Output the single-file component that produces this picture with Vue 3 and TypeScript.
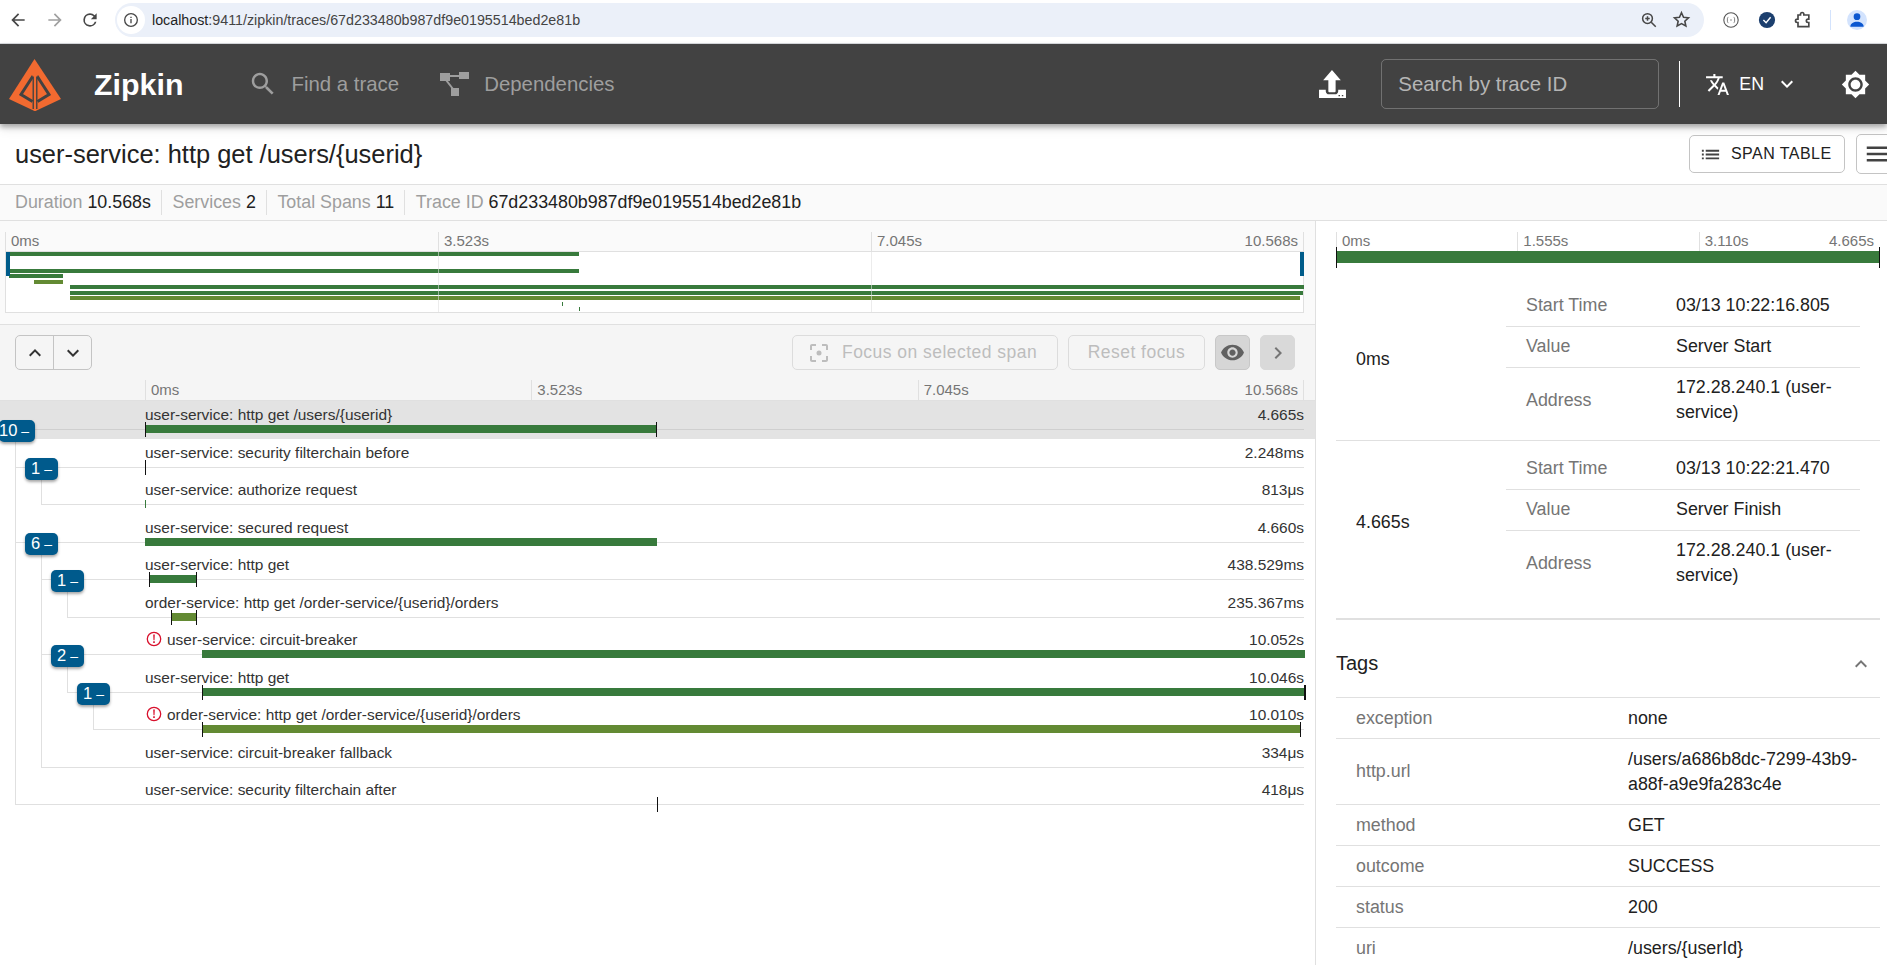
<script setup lang="ts">
interface Span {
  label: string
  dur: string
  line: number
  x1: number
  x2: number
  color?: string
  ticksL?: boolean
  ticksR?: boolean
  thickR?: boolean
  error?: boolean
  selected?: boolean
  badge?: string
  badgeX?: number
}
const green = '#387a3c'
const olive = '#638a33'
const chartLeft = 145
const chartWidth = 1159
const spans: Span[] = [
  { label: 'user-service: http get /users/{userid}', dur: '4.665s', line: 0, x1: 145, x2: 657, color: green, ticksL: true, ticksR: true, selected: true, badge: '10', badgeX: -1 },
  { label: 'user-service: security filterchain before', dur: '2.248ms', line: 15, x1: 145, x2: 145, ticksL: true, badge: '1', badgeX: 25 },
  { label: 'user-service: authorize request', dur: '813μs', line: 41, x1: 145, x2: 146, color: green },
  { label: 'user-service: secured request', dur: '4.660s', line: 15, x1: 145, x2: 657, color: green, badge: '6', badgeX: 25 },
  { label: 'user-service: http get', dur: '438.529ms', line: 41, x1: 149, x2: 197, color: green, ticksL: true, ticksR: true, badge: '1', badgeX: 51 },
  { label: 'order-service: http get /order-service/{userid}/orders', dur: '235.367ms', line: 67, x1: 171, x2: 197, color: olive, ticksL: true, ticksR: true },
  { label: 'user-service: circuit-breaker', dur: '10.052s', line: 41, x1: 202, x2: 1305, color: green, error: true, badge: '2', badgeX: 51 },
  { label: 'user-service: http get', dur: '10.046s', line: 67, x1: 202, x2: 1305, color: green, ticksL: true, ticksR: true, thickR: true, badge: '1', badgeX: 77 },
  { label: 'order-service: http get /order-service/{userid}/orders', dur: '10.010s', line: 93, x1: 202, x2: 1301, color: olive, error: true, ticksL: true, ticksR: true },
  { label: 'user-service: circuit-breaker fallback', dur: '334μs', line: 41, x1: 642, x2: 642 },
  { label: 'user-service: security filterchain after', dur: '418μs', line: 15, x1: 657, x2: 657, ticksL: true }
]
const laneStyle = (s: Span) => ({
  marginLeft: `${((s.x1 - chartLeft) / chartWidth) * 100}%`,
  width: `${((s.x2 - s.x1) / chartWidth) * 100}%`,
  background: s.color ?? 'transparent'
})
const vlines = [
  { x: 15, y1: 41, y2: 403 },
  { x: 41, y1: 79, y2: 103 },
  { x: 41, y1: 153, y2: 366 },
  { x: 67, y1: 191, y2: 216 },
  { x: 67, y1: 266, y2: 291 },
  { x: 93, y1: 303, y2: 328 }
]
const miniBars = [
  { left: 2, w: 571, c: green, row: 0 },
  { left: 0, w: 0, c: green, row: 1 },
  { left: 0, w: 0, c: green, row: 2 },
  { left: 3, w: 570, c: green, row: 3 },
  { left: 3, w: 54, c: green, row: 4 },
  { left: 28, w: 29, c: olive, row: 5 },
  { left: 64, w: 1234, c: green, row: 6 },
  { left: 64, w: 1233, c: green, row: 7 },
  { left: 64, w: 1230, c: olive, row: 8 },
  { left: 556, w: 1, c: green, row: 9 },
  { left: 573, w: 1, c: green, row: 10 }
]
const miniStyle = (b: { left: number; w: number; c: string }) => ({
  marginLeft: `${b.left}px`,
  width: `${b.w}px`,
  background: b.c
})
const annotations = [
  { at: '0ms', start: '03/13 10:22:16.805', value: 'Server Start' },
  { at: '4.665s', start: '03/13 10:22:21.470', value: 'Server Finish' }
]
const tags = [
  { k: 'exception', v: 'none' },
  { k: 'http.url', v: '/users/a686b8dc-7299-43b9-a88f-a9e9fa283c4e' },
  { k: 'method', v: 'GET' },
  { k: 'outcome', v: 'SUCCESS' },
  { k: 'status', v: '200' },
  { k: 'uri', v: '/users/{userId}' }
]
const info = [
  { k: 'Duration', v: '10.568s' },
  { k: 'Services', v: '2' },
  { k: 'Total Spans', v: '11' },
  { k: 'Trace ID', v: '67d233480b987df9e0195514bed2e81b' }
]
</script>

<template>
  <div class="page">
    <div class="chrome">
      <svg class="c-ic" viewBox="0 0 24 24" width="20" height="20"><path fill="#474747" d="M20 11H7.800l5.600-5.600L12 4l-8 8 8 8 1.400-1.400L7.800 13H20z" /></svg>
      <svg class="c-ic fwd" viewBox="0 0 24 24" width="20" height="20"><path fill="#a0a0a0" d="M4 11h12.200l-5.600-5.600L12 4l8 8-8 8-1.400-1.400 5.600-5.600H4z" /></svg>
      <svg class="c-ic rel" viewBox="0 0 24 24" width="20" height="20"><path fill="#474747" d="M17.650 6.350A7.960 7.960 0 0 0 12 4a8 8 0 1 0 7.730 10h-2.080A6 6 0 1 1 12 6c1.660 0 3.140.69 4.220 1.780L13 11h7V4z" /></svg>
      <div class="omni">
        <span class="omni-i"><svg viewBox="0 0 24 24" width="16" height="16"><circle cx="12" cy="12" r="9.500" fill="none" stroke="#474747" stroke-width="2" /><path fill="#474747" d="M11 10.500h2V17h-2zM11 7h2v2h-2z" /></svg></span>
        <span class="url"><b>localhost</b>:9411/zipkin/traces/67d233480b987df9e0195514bed2e81b</span>
        <svg class="zoomi" viewBox="0 0 24 24" width="18" height="18"><circle cx="10" cy="10" r="6.500" fill="none" stroke="#474747" stroke-width="2" /><path stroke="#474747" stroke-width="2" d="M15 15l6 6M10 7v6M7 10h6" /></svg>
        <svg class="star" viewBox="0 0 24 24" width="19" height="19"><path fill="none" stroke="#474747" stroke-width="2" d="M12 3.500l2.600 5.700 6.200.7-4.600 4.200 1.300 6.100L12 17.100l-5.500 3.100 1.300-6.100-4.600-4.200 6.200-.7z" /></svg>
      </div>
      <svg class="ext e1" viewBox="0 0 20 20" width="18" height="18"><circle cx="10" cy="10" r="8" fill="none" stroke="#555" stroke-width="1.200" /><path fill="none" stroke="#777" d="M7 7c-1 0-1 1-1 3s0 3 1 3M13 7c1 0 1 1 1 3s0 3-1 3M9 10h2" /></svg>
      <svg class="ext e2" viewBox="0 0 20 20" width="18" height="18"><circle cx="10" cy="10" r="9" fill="#1c3f6e" /><path fill="none" stroke="#fff" stroke-width="1.600" d="M6 10l3 3 5-6" /></svg>
      <svg class="ext e3" viewBox="0 0 24 24" width="20" height="20"><path fill="none" stroke="#474747" stroke-width="2" d="M9 5a2 2 0 0 1 4 0v1h6v5h-1a2 2 0 0 0 0 4h1v5H6v-5H5a2 2 0 0 1 0-4h1V6h3z" /></svg>
      <span class="c-div"></span>
      <span class="avatar"><svg viewBox="0 0 24 24" width="20" height="20"><circle cx="12" cy="8" r="4" fill="#0b57d0" /><path fill="#0b57d0" d="M4 20c0-4 4-6 8-6s8 2 8 6z" /></svg></span>
    </div>

    <header class="bar">
      <svg class="logo" viewBox="0 0 52 52" width="52" height="52">
        <path fill="#f26a30" d="M25.500 0L52 40 26.500 52h-1L0 40z" />
        <path fill="none" stroke="#424242" stroke-width="3" d="M24 17L12 35.500 23.500 42.500M28 17L40 35.500 28.500 42.500" />
        <path fill="none" stroke="#424242" stroke-width="1.500" d="M24.300 17V50M27.700 17V50" />
        <path fill="#f26a30" d="M26 11l2.500 6.500h-1.400V52h-2.200V17.500h-1.400z" />
      </svg>
      <span class="brand">Zipkin</span>
      <svg class="nav-s" viewBox="0 0 24 24" width="30" height="30"><path fill="#9e9e9e" d="M15.500 14h-.79l-.28-.27C15.410 12.590 16 11.110 16 9.500 16 5.910 13.090 3 9.500 3S3 5.910 3 9.500 5.910 16 9.500 16c1.610 0 3.090-.59 4.230-1.570l.27.28v.79l5 4.990L20.490 19l-4.990-5zm-6 0C7.010 14 5 11.990 5 9.500S7.010 5 9.500 5 14 7.010 14 9.500 11.990 14 9.500 14z" /></svg>
      <span class="nav-t">Find a trace</span>
      <svg class="nav-d" viewBox="0 0 29 24" width="29" height="24"><path fill="#9e9e9e" d="M0 1h10v8H0zM19 0h10v7H19zM11 16h8v8h-8z" /><path fill="none" stroke="#9e9e9e" stroke-width="2" d="M9 4h11M6 8l7 9" /></svg>
      <span class="nav-t">Dependencies</span>
      <svg class="upload" viewBox="0 0 26 27" width="27" height="28"><path fill="#fff" d="M12.500 0L21 10h-5v10.500a1 1 0 0 1-1 1h-5a1 1 0 0 1-1-1V10H4z" /><path fill="#fff" d="M0 19h6.500v1.500c0 2 1.500 3 3 3h6c1.500 0 3-1 3-3V19H26v8H0z" /><path fill="#424242" d="M18.800 24h1.400v1.400h-1.400zM22 24h1.400v1.400H22z" /></svg>
      <div class="search">Search by trace ID</div>
      <span class="hdiv"></span>
      <svg class="tr" viewBox="0 0 24 24" width="25" height="25"><path fill="#fff" d="M12.870 15.070l-2.540-2.510.03-.03c1.740-1.940 2.980-4.170 3.710-6.530H17V4h-7V2H8v2H1v1.990h11.170C11.500 7.920 10.440 9.750 9 11.350 8.070 10.320 7.300 9.190 6.690 8h-2c.73 1.630 1.730 3.170 2.980 4.560l-5.090 5.020L4 19l5-5 3.110 3.110.76-2.040zM18.500 10h-2L12 22h2l1.120-3h4.750L21 22h2l-4.500-12zm-2.620 7l1.620-4.330L19.120 17h-3.240z" /></svg>
      <span class="en">EN</span>
      <svg class="chev" viewBox="0 0 24 24" width="24" height="24"><path fill="#fff" d="M16.590 8.590L12 13.170 7.410 8.590 6 10l6 6 6-6z" /></svg>
      <svg class="theme" viewBox="0 0 24 24" width="29" height="29"><path fill="#fff" d="M20 8.690V4h-4.690L12 .69 8.690 4H4v4.690L.69 12 4 15.310V20h4.690L12 23.310 15.310 20H20v-4.690L23.310 12 20 8.690zM12 18c-3.310 0-6-2.690-6-6s2.690-6 6-6 6 2.690 6 6-2.690 6-6 6zm0-10c-2.210 0-4 1.790-4 4s1.790 4 4 4 4-1.790 4-4-1.790-4-4-4z" /></svg>
    </header>

    <div class="title-row">
      <h1 class="title">user-service: http get /users/{userid}</h1>
      <button class="t-btn span-btn">
        <svg viewBox="0 0 24 24" width="23" height="23"><path fill="#424242" d="M3 13h2v-2H3v2zm0 4h2v-2H3v2zm0-8h2V7H3v2zm4 4h14v-2H7v2zm0 4h14v-2H7v2zM7 7v2h14V7H7z" /></svg>
        <span>SPAN TABLE</span>
      </button>
      <button class="t-btn menu-btn">
        <svg viewBox="0 0 24 24" width="30" height="30"><path fill="#424242" d="M3 18h18v-2H3v2zm0-5h18v-2H3v2zm0-7v2h18V6H3z" /></svg>
      </button>
    </div>

    <div class="info">
      <div v-for="i in info" :key="i.k" class="info-item"><span class="info-k">{{ i.k }}</span> <span class="info-v">{{ i.v }}</span></div>
    </div>

    <main class="main">
      <section class="left">
        <div class="mini">
          <div class="mini-axis">
            <span class="m-lab">0ms</span>
            <span class="m-lab">3.523s</span>
            <span class="m-lab">7.045s</span>
            <span class="m-lab end">10.568s</span>
          </div>
          <div class="mini-chart">
            <span class="m-grid g1"></span>
            <span class="m-grid g2"></span>
            <span class="handle h-l"></span>
            <span class="handle h-r"></span>
            <div v-for="b in miniBars" :key="b.row" class="m-row"><div class="m-bar" :style="miniStyle(b)"></div></div>
          </div>
        </div>

        <div class="tools">
          <div class="updown">
            <button class="ud"><svg viewBox="0 0 24 24" width="24" height="24"><path fill="#333" d="M12 8l-6 6 1.410 1.410L12 10.830l4.590 4.580L18 14z" /></svg></button>
            <button class="ud"><svg viewBox="0 0 24 24" width="24" height="24"><path fill="#333" d="M16.590 8.590L12 13.170 7.410 8.590 6 10l6 6 6-6z" /></svg></button>
          </div>
          <button class="dis focus">
            <svg viewBox="0 0 24 24" width="24" height="24"><path fill="#bdbdbd" d="M5 15H3v4c0 1.100.9 2 2 2h4v-2H5v-4zM5 5h4V3H5c-1.100 0-2 .9-2 2v4h2V5zm14-2h-4v2h4v4h2V5c0-1.100-.9-2-2-2zm0 16h-4v2h4c1.100 0 2-.9 2-2v-4h-2v4z" /><circle cx="12" cy="12" r="2.500" fill="#bdbdbd" /></svg>
            <span>Focus on selected span</span>
          </button>
          <button class="dis reset">Reset focus</button>
          <button class="sq on"><svg viewBox="0 0 24 24" width="25" height="25"><path fill="#616161" d="M12 4.500C7 4.500 2.730 7.610 1 12c1.730 4.390 6 7.500 11 7.500s9.270-3.110 11-7.500c-1.730-4.390-6-7.500-11-7.500zM12 17c-2.760 0-5-2.240-5-5s2.240-5 5-5 5 2.240 5 5-2.240 5-5 5zm0-8c-1.660 0-3 1.340-3 3s1.340 3 3 3 3-1.340 3-3-1.340-3-3-3z" /></svg></button>
          <button class="sq next"><svg viewBox="0 0 24 24" width="24" height="24"><path fill="#757575" d="M10 6L8.590 7.410 13.170 12l-4.580 4.590L10 18l6-6z" /></svg></button>
        </div>

        <div class="axis">
          <span class="a-lab">0ms</span>
          <span class="a-lab">3.523s</span>
          <span class="a-lab">7.045s</span>
          <span class="a-lab end">10.568s</span>
        </div>

        <div class="rows">
          <div v-for="s in spans" :key="s.label + s.dur" class="row" :class="{ sel: s.selected }">
            <span class="hline" :style="{ left: s.line + 'px' }"></span>
            <div class="r-text">
              <span class="r-label">
                <svg v-if="s.error" class="err" viewBox="0 0 16 16" width="16" height="16"><circle cx="8" cy="8" r="6.700" fill="none" stroke="#d8102c" stroke-width="1.300" /><path fill="#d8102c" d="M7.200 3.600h1.600l-.3 5.600h-1zM7.200 10.300h1.600v1.700H7.200z" /></svg>
                {{ s.label }}
              </span>
              <span class="r-dur">{{ s.dur }}</span>
            </div>
            <div class="lane">
              <div class="s-bar" :style="laneStyle(s)">
                <i v-if="s.ticksL" class="tick tl"></i>
                <i v-if="s.ticksR" class="tick tr2" :class="{ thick: s.thickR }"></i>
              </div>
            </div>
            <span v-if="s.badge" class="badge" :class="{ wide: s.badge === '10' }" :style="{ left: s.badgeX + 'px' }">{{ s.badge }}<em>–</em></span>
          </div>
          <span v-for="v in vlines" :key="v.x + '-' + v.y1" class="vline" :style="{ left: v.x + 'px', top: v.y1 + 'px', height: v.y2 - v.y1 + 'px' }"></span>
        </div>
      </section>

      <aside class="right">
        <div class="d-axis">
          <span class="d-lab">0ms</span>
          <span class="d-lab">1.555s</span>
          <span class="d-lab">3.110s</span>
          <span class="d-lab end">4.665s</span>
        </div>
        <div class="d-bar"></div>

        <div class="annos">
          <div v-for="a in annotations" :key="a.at" class="anno">
            <div class="anno-at">{{ a.at }}</div>
            <div class="anno-tb">
              <div class="a-row"><span class="k">Start Time</span><span class="v">{{ a.start }}</span></div>
              <div class="a-row"><span class="k">Value</span><span class="v">{{ a.value }}</span></div>
              <div class="a-row last"><span class="k">Address</span><span class="v">172.28.240.1 (user-service)</span></div>
            </div>
          </div>
        </div>

        <div class="tags-head">
          <span>Tags</span>
          <svg viewBox="0 0 24 24" width="24" height="24"><path fill="#757575" d="M12 8l-6 6 1.410 1.410L12 10.830l4.590 4.580L18 14z" /></svg>
        </div>
        <div v-for="t in tags" :key="t.k" class="tag">
          <span class="k">{{ t.k }}</span>
          <span class="v">{{ t.v }}</span>
        </div>
      </aside>
    </main>
  </div>
</template>

<style>
html, body { margin: 0; overflow: hidden; background: #fff; }
</style>

<style scoped>
.page { width: 1887px; height: 965px; overflow: hidden; display: flex; flex-direction: column; font-family: "Liberation Sans", Arial, sans-serif; color: #212121; }
button { font-family: inherit; cursor: default; }

.chrome { height: 44px; flex: none; display: flex; align-items: center; background: #fff; border-bottom: 1px solid #dadce0; box-sizing: border-box; padding: 0 0 4px 8px; }
.c-ic { flex: none; margin-right: 17px; }
.c-ic.fwd { margin-right: 15px; }
.omni { width: 1589px; height: 34px; margin-left: -2px; flex: none; border-radius: 17px; background: #ebf0f9; display: flex; align-items: center; padding-left: 2px; box-sizing: border-box; }
.omni-i { width: 28px; height: 28px; border-radius: 50%; background: #fff; display: flex; align-items: center; justify-content: center; flex: none; }
.url { margin-left: 7px; font-size: 14.270px; color: #444; white-space: nowrap; }
.url b { font-weight: 400; color: #1f1f1f; }
.zoomi { margin-left: auto; }
.star { margin: 0 13px 0 14px; }
.ext { flex: none; }
.e1 { margin-left: 18px; }
.e2 { margin-left: 18px; }
.e3 { margin-left: 17px; }
.c-div { width: 1px; height: 20px; background: #d3e3fd; margin: 0 16px 0 17px; }
.avatar { width: 20px; height: 20px; border-radius: 50%; background: #d3e3fd; display: flex; align-items: center; justify-content: center; overflow: hidden; }

.bar { height: 80px; flex: none; background: #424242; display: flex; align-items: center; padding: 0 17px 0 9px; position: relative; z-index: 2; box-shadow: 0 3px 5px rgba(0,0,0,.3), 0 6px 10px rgba(0,0,0,.08); }
.logo { flex: none; margin: 2px 0 0 0; }
.brand { font-size: 30.400px; font-weight: 700; color: #fff; margin-left: 33px; margin-right: 65px; }
.nav-s { flex: none; margin-right: 13px; }
.nav-t { font-size: 20.400px; color: #9e9e9e; }
.nav-d { flex: none; margin-left: 41px; margin-right: 15px; }
.upload { margin-left: auto; flex: none; }
.search { width: 278px; height: 50px; margin-left: 35px; box-sizing: border-box; border: 1px solid rgba(255,255,255,.25); border-radius: 5px; display: flex; align-items: center; padding-left: 16px; font-size: 20.400px; color: #b5b5b5; }
.hdiv { width: 1px; height: 46px; background: #fff; margin-left: 20px; }
.tr { margin-left: 25px; flex: none; }
.en { color: #fff; font-size: 17.800px; margin-left: 9px; }
.chev { margin-left: 11px; flex: none; }
.theme { margin-left: 42px; flex: none; }

.title-row { height: 61px; flex: none; box-sizing: border-box; border-bottom: 1px solid #e0e0e0; display: flex; align-items: center; padding-left: 15px; }
.title { margin: 0; font-size: 25.450px; font-weight: 400; color: #212121; }
.t-btn { background: #fff; border: 1px solid #c4c4c4; border-radius: 5px; display: flex; align-items: center; color: #212121; flex: none; }
.span-btn { margin-left: auto; width: 156px; height: 38px; padding: 0 0 0 9px; font-size: 16px; letter-spacing: .45px; }
.span-btn span { margin-left: 9px; }
.menu-btn { width: 60px; height: 40px; margin-left: 11px; margin-right: -29px; padding: 0 0 0 6px; }

.info { height: 36px; flex: none; box-sizing: border-box; background: #fafafa; border-bottom: 1px solid #e0e0e0; display: flex; align-items: center; padding-left: 4px; font-size: 17.850px; }
.info-item { padding: 0 10.300px 0 11px; height: 25px; line-height: 24px; border-left: 1px solid #e0e0e0; white-space: nowrap; }
.info-item + .info-item { padding-left: 10.300px; }
.info-item:first-child { border-left: 0; }
.info-k { color: #9e9e9e; }
.info-v { color: #212121; }

.main { flex: 1; display: flex; min-height: 0; }
.left { width: 1316px; flex: none; box-sizing: border-box; border-right: 1px solid #e0e0e0; }
.right { flex: 1; padding: 0 7px 0 20px; min-width: 0; }

.mini { height: 104px; box-sizing: border-box; background: #fafafa; border-bottom: 1px solid #e0e0e0; padding: 11px 11px 0 5px; }
.mini-axis { display: grid; grid-template-columns: repeat(3, 1fr); height: 20px; position: relative; font-size: 15px; color: #757575; }
.m-lab { border-left: 1px solid #e0e0e0; padding-left: 5px; line-height: 17px; }
.m-lab.end { position: absolute; right: 0; top: 0; border-left: 0; border-right: 1px solid #e0e0e0; padding: 0 5px 0 0; height: 20px; }
.mini-chart { height: 61px; box-sizing: border-box; background: #fff; border: 1px solid #e0e0e0; border-top: 0; box-shadow: 0 -1px 0 #e0e0e0; position: relative; }
.m-grid { position: absolute; top: 0; bottom: 0; width: 1px; background: #e0e0e0; z-index: 2; opacity: .6; }
.g1 { left: 432px; }
.g2 { left: 865px; }
.handle { position: absolute; top: 0; width: 4px; height: 24px; background: #005c8a; z-index: 3; }
.h-l { left: 0; }
.h-r { right: -1px; }
.m-row { height: 5.550px; }
.m-bar { height: 4px; }

.tools { height: 55px; box-sizing: border-box; background: #f5f5f5; display: flex; align-items: flex-start; padding: 10px 20px 0 15px; }
.updown { display: flex; width: 77px; height: 35px; box-sizing: border-box; border: 1px solid #c4c4c4; border-radius: 5px; margin-right: auto; }
.ud { flex: 1; border: 0; background: none; padding: 0; display: flex; align-items: center; justify-content: center; }
.ud + .ud { border-left: 1px solid #c4c4c4; }
.dis { height: 35px; box-sizing: border-box; background: none; border: 1px solid #dcdcdc; border-radius: 5px; color: #bdbdbd; font-size: 17.500px; letter-spacing: .47px; display: flex; align-items: center; justify-content: center; padding: 0; }
.focus { width: 266px; gap: 11px; justify-content: flex-start; padding-left: 14px; }
.reset { width: 137px; margin-left: 10px; }
.sq { width: 35px; height: 35px; margin-left: 10px; box-sizing: border-box; border: 1px solid #c8c8c8; border-radius: 5px; background: #d6d6d6; padding: 0; display: flex; align-items: center; justify-content: center; }
.sq.next { background: #d9d9d9; border-color: #d9d9d9; }

.axis { height: 21px; box-sizing: border-box; background: #f5f5f5; padding: 0 11px 0 145px; border-bottom: 1px solid #e0e0e0; display: grid; grid-template-columns: repeat(3, 1fr); position: relative; font-size: 15px; color: #757575; }
.a-lab { border-left: 1px solid #e0e0e0; padding-left: 5px; line-height: 19px; }
.a-lab.end { position: absolute; right: 11px; top: 0; height: 20px; border-left: 0; border-right: 1px solid #e0e0e0; padding: 0 5px 0 0; }

.rows { position: relative; }
.row { height: 37.500px; box-sizing: border-box; padding: 5px 11px 0 145px; position: relative; }
.row.sel { background: #e3e3e3; }
.hline { position: absolute; right: 11px; top: 28px; height: 1px; background: #e0e0e0; }
.sel .hline { background: #cfcfcf; }
.r-text { display: flex; justify-content: space-between; font-size: 15.450px; line-height: 18px; color: #333; position: relative; }
.r-label { display: flex; align-items: center; white-space: nowrap; }
.err { margin: 0 5px 0 1px; flex: none; position: relative; top: -1px; }
.lane { position: relative; height: 10px; }
.s-bar { height: 8px; position: relative; top: 1px; }
.tick { position: absolute; top: -3px; height: 15px; width: 1px; background: #111; }
.tl { left: 0; }
.tr2 { right: 0; }
.tr2.thick { width: 2px; right: -1px; }
.badge { position: absolute; top: 19px; width: 33px; height: 22px; border-radius: 5px; background: #005a8c; color: #fff; font-size: 16.500px; line-height: 21px; text-align: center; box-shadow: 0 2px 3px rgba(0,0,0,.35); z-index: 3; box-sizing: border-box; }
.badge.wide { width: 36px; text-align: right; padding-right: 6px; }
.badge em { font-style: normal; font-size: 14px; margin-left: 4px; }
.vline { position: absolute; width: 1px; background: #e0e0e0; z-index: 1; }

.d-axis { height: 30px; box-sizing: border-box; padding-top: 11px; display: grid; grid-template-columns: repeat(3, 1fr); position: relative; font-size: 15px; color: #757575; }
.d-lab { border-left: 1px solid #e0e0e0; padding-left: 5px; line-height: 17px; }
.d-lab.end { position: absolute; right: 0; top: 11px; border-left: 0; padding: 0 6px 0 0; }
.d-bar { height: 12px; background: #387a3c; position: relative; }
.d-bar::before, .d-bar::after { content: ""; position: absolute; top: -4px; width: 1px; height: 21px; background: #111; }
.d-bar::before { left: 0; }
.d-bar::after { right: 0; }

.annos { margin-top: 15px; padding-bottom: 15px; border-bottom: 2px solid #e0e0e0; }
.anno { display: flex; align-items: center; border-bottom: 1px solid #e0e0e0; }
.anno:last-child { border-bottom: 0; }
.anno-at { width: 170px; box-sizing: border-box; padding-left: 20px; font-size: 17.850px; color: #212121; }
.anno-tb { width: 354px; padding-top: 8px; }
.a-row { display: flex; align-items: center; min-height: 41px; box-sizing: border-box; border-bottom: 1px solid #e0e0e0; font-size: 17.850px; line-height: 25px; padding: 6.500px 0 8.500px; }
.a-row.last { border-bottom: 0; min-height: 72px; padding: 7px 0 15px; }
.a-row .k { width: 170px; flex: none; padding-left: 20px; box-sizing: border-box; color: #757575; }
.a-row .v { width: 180px; color: #212121; }

.tags-head { height: 78px; box-sizing: border-box; display: flex; align-items: center; justify-content: space-between; padding: 10px 7px 0 0; border-bottom: 1px solid #e0e0e0; font-size: 20px; color: #212121; }
.tag { display: flex; align-items: center; min-height: 41px; box-sizing: border-box; border-bottom: 1px solid #e0e0e0; font-size: 17.850px; line-height: 25px; padding: 7.500px 0; }
.tag .k { width: 292px; flex: none; padding-left: 20px; box-sizing: border-box; color: #757575; }
.tag .v { width: 245px; color: #212121; overflow-wrap: anywhere; }
</style>
